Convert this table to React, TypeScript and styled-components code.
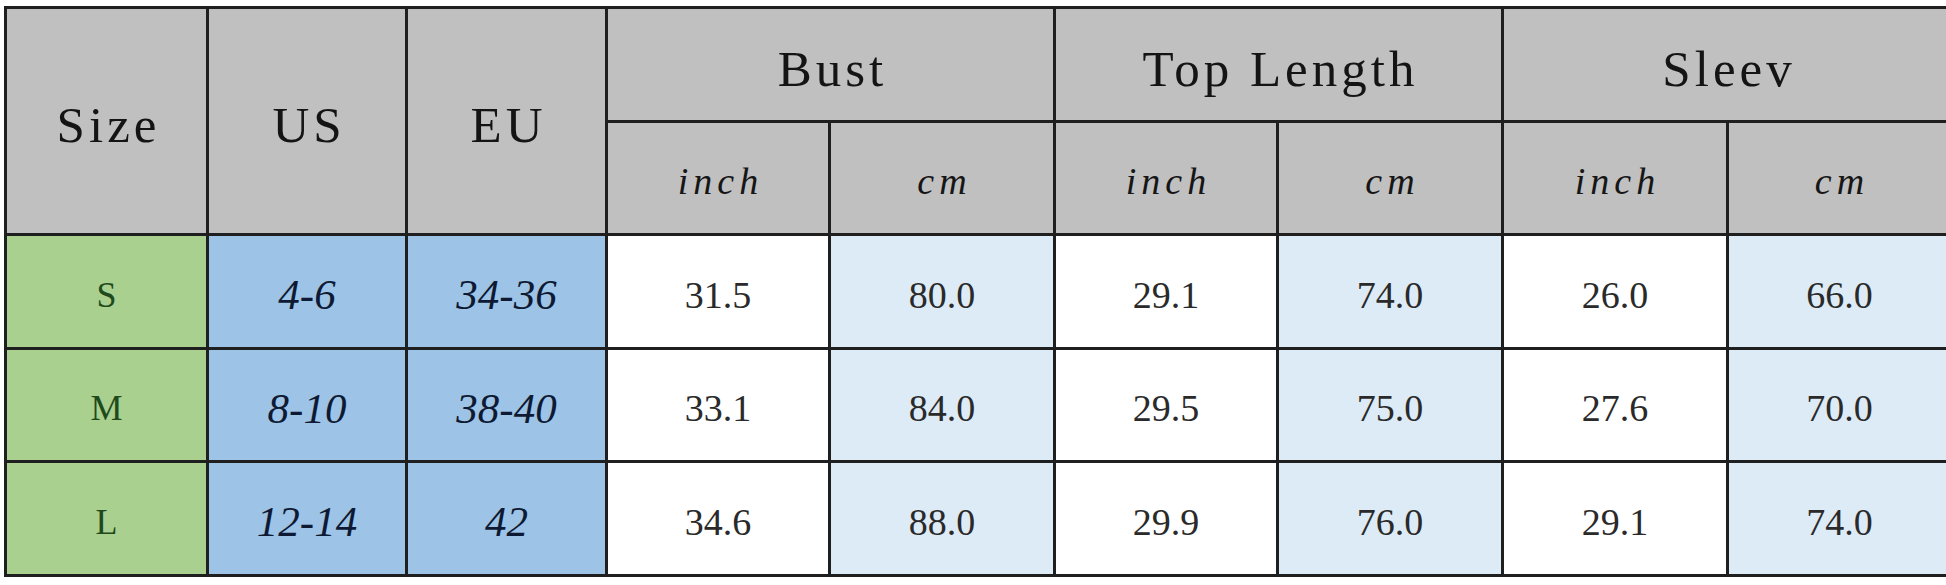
import React from "react";
import styled, { createGlobalStyle } from "styled-components";

const Global = createGlobalStyle`
  html, body {
    margin: 0;
    padding: 0;
    background: #ffffff;
    overflow: hidden;
  }
  body {
    font-family: "Liberation Serif", serif;
  }
`;

const Page = styled.div`
  width: 1946px;
  height: 585px;
  overflow: hidden;
  padding: 6px 0 0 4px;
  box-sizing: border-box;
`;

const Grid = styled.div`
  display: inline-grid;
  grid-template-columns: 199px 196px 197px 220px 222px 220px 222px 222px 221px;
  grid-template-rows: 111px 110px 111px 110px 111px;
  gap: 3px;
  padding: 3px;
  background: #1f1f1f;
`;

type Tone = "gray" | "green" | "blue" | "pale" | "white";

const tones: Record<Tone, string> = {
  gray: "#c0c0c0",
  green: "#a9d08e",
  blue: "#9dc3e6",
  pale: "#ddebf7",
  white: "#ffffff",
};

const Cell = styled.div<{ $tone: Tone; $rowSpan?: number; $colSpan?: number }>`
  background: ${(p) => tones[p.$tone]};
  grid-row: span ${(p) => p.$rowSpan ?? 1};
  grid-column: span ${(p) => p.$colSpan ?? 1};
  display: flex;
  align-items: center;
  justify-content: center;
  overflow: hidden;
`;

const HeadText = styled.span`
  font-family: "Liberation Serif", serif;
  font-size: 51px;
  letter-spacing: 4px;
  color: #141414;
  padding-top: 8px;
  padding-left: 4px;
`;

const UnitText = styled.span`
  font-family: "Liberation Serif", serif;
  font-style: italic;
  font-size: 38px;
  letter-spacing: 5px;
  color: #161616;
  padding-top: 6px;
  padding-left: 5px;
`;

const SizeText = styled.span`
  font-family: "Liberation Serif", serif;
  font-size: 36px;
  color: #1f4a1c;
  padding-top: 6px;
`;

const RangeText = styled.span`
  font-family: "Liberation Serif", serif;
  font-style: italic;
  font-size: 43px;
  color: #0e1a33;
  padding-top: 6px;
`;

const NumText = styled.span`
  font-family: "Liberation Serif", serif;
  font-size: 38px;
  color: #2a2a2a;
  padding-top: 6px;
`;

const rows = [
  { size: "S", us: "4-6", eu: "34-36", vals: ["31.5", "80.0", "29.1", "74.0", "26.0", "66.0"] },
  { size: "M", us: "8-10", eu: "38-40", vals: ["33.1", "84.0", "29.5", "75.0", "27.6", "70.0"] },
  { size: "L", us: "12-14", eu: "42", vals: ["34.6", "88.0", "29.9", "76.0", "29.1", "74.0"] },
];

const groups = ["Bust", "Top Length", "Sleev"];

export default function App() {
  return (
    <>
      <Global />
      <Page>
        <Grid>
          <Cell $tone="gray" $rowSpan={2}>
            <HeadText>Size</HeadText>
          </Cell>
          <Cell $tone="gray" $rowSpan={2}>
            <HeadText>US</HeadText>
          </Cell>
          <Cell $tone="gray" $rowSpan={2}>
            <HeadText>EU</HeadText>
          </Cell>
          {groups.map((g) => (
            <Cell key={g} $tone="gray" $colSpan={2}>
              <HeadText>{g}</HeadText>
            </Cell>
          ))}
          {groups.map((g) => (
            <React.Fragment key={g + "-u"}>
              <Cell $tone="gray">
                <UnitText>inch</UnitText>
              </Cell>
              <Cell $tone="gray">
                <UnitText>cm</UnitText>
              </Cell>
            </React.Fragment>
          ))}
          {rows.map((r) => (
            <React.Fragment key={r.size}>
              <Cell $tone="green">
                <SizeText>{r.size}</SizeText>
              </Cell>
              <Cell $tone="blue">
                <RangeText>{r.us}</RangeText>
              </Cell>
              <Cell $tone="blue">
                <RangeText>{r.eu}</RangeText>
              </Cell>
              {r.vals.map((v, i) => (
                <Cell key={i} $tone={i % 2 === 0 ? "white" : "pale"}>
                  <NumText>{v}</NumText>
                </Cell>
              ))}
            </React.Fragment>
          ))}
        </Grid>
      </Page>
    </>
  );
}
